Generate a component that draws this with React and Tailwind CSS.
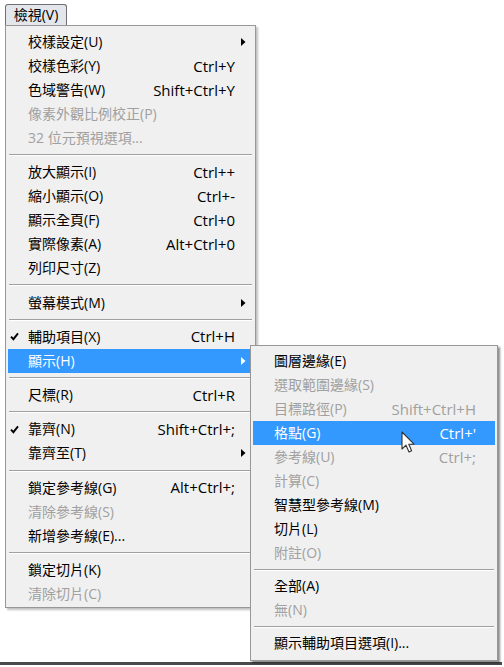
const mainItems = [
  { t: "校樣設定(U)", sub: true },
  { t: "校樣色彩(Y)", k: "Ctrl+Y" },
  { t: "色域警告(W)", k: "Shift+Ctrl+Y" },
  { t: "像素外觀比例校正(P)", d: true },
  { t: "32 位元預視選項...", d: true },
  "sep",
  { t: "放大顯示(I)", k: "Ctrl++" },
  { t: "縮小顯示(O)", k: "Ctrl+-" },
  { t: "顯示全頁(F)", k: "Ctrl+0" },
  { t: "實際像素(A)", k: "Alt+Ctrl+0" },
  { t: "列印尺寸(Z)" },
  "sep",
  { t: "螢幕模式(M)", sub: true },
  "sep",
  { t: "輔助項目(X)", k: "Ctrl+H", c: true },
  { t: "顯示(H)", sub: true, h: true },
  "sep",
  { t: "尺標(R)", k: "Ctrl+R" },
  "sep",
  { t: "靠齊(N)", k: "Shift+Ctrl+;", c: true },
  { t: "靠齊至(T)", sub: true },
  "sep",
  { t: "鎖定參考線(G)", k: "Alt+Ctrl+;" },
  { t: "清除參考線(S)", d: true },
  { t: "新增參考線(E)..." },
  "sep",
  { t: "鎖定切片(K)" },
  { t: "清除切片(C)", d: true },
];

const showItems = [
  { t: "圖層邊緣(E)" },
  { t: "選取範圍邊緣(S)", d: true },
  { t: "目標路徑(P)", k: "Shift+Ctrl+H", d: true },
  { t: "格點(G)", k: "Ctrl+'", h: true },
  { t: "參考線(U)", k: "Ctrl+;", d: true },
  { t: "計算(C)", d: true },
  { t: "智慧型參考線(M)" },
  { t: "切片(L)" },
  { t: "附註(O)", d: true },
  "sep",
  { t: "全部(A)" },
  { t: "無(N)", d: true },
  "sep",
  { t: "顯示輔助項目選項(I)..." },
];

const font = { fontFamily: '"Open Sans", "Noto Sans CJK TC", sans-serif' };

function Check() {
  return (
    <svg width="9" height="9" viewBox="0 0 9 9" className="ml-[2px]">
      <path d="M1 4.6 L3.4 7.2 L8 1.4" fill="none" stroke="currentColor" strokeWidth="1.9" />
    </svg>
  );
}

function Arrow() {
  return (
    <svg width="5" height="8" viewBox="0 0 5 8">
      <polygon points="0,0 4.5,4 0,8" fill="currentColor" />
    </svg>
  );
}

function Sep({ h }) {
  return (
    <div className={`flex flex-col justify-center ${h} px-[1px]`}>
      <div className="h-px bg-[#a0a0a0]" />
      <div className="h-px bg-white" />
    </div>
  );
}

function Row({ item, padLeft, right }) {
  const color = item.h ? "bg-[#3399ff] text-white" : item.d ? "text-[#a0a0a0]" : "text-black";
  return (
    <div className={`flex h-6 items-center ${color}`}>
      <div className={`${padLeft} flex shrink-0 items-center`}>{item.c && <Check />}</div>
      <div className="flex-1 whitespace-nowrap">{item.t}</div>
      {item.k && <div className="whitespace-nowrap text-[15px]">{item.k}</div>}
      <div className={`${right} flex shrink-0 items-center pl-[6px]`}>{item.sub && <Arrow />}</div>
    </div>
  );
}

export default function App() {
  return (
    <div className="relative h-[667px] w-[504px] bg-white text-[14px] leading-none" style={font}>
      <div className="h-[665px] w-[502px] border-b-[3px] border-b-[#4a4a4a] bg-white">
        <div className="pl-[5px] pt-[4px]">
          <div className="relative z-10 flex h-[21px] w-[62px] items-center justify-center rounded-t-[3px] border border-b-0 border-[#707070] bg-[#e3e6ea] text-black">
            檢視(V)
          </div>
          <div className="w-[251px] border border-[#979797] bg-[#f0f0f0] px-[2px] pb-[1px] pt-[4px] shadow-[2px_2px_2px_rgba(0,0,0,0.25)]">
            {mainItems.map((it, i) =>
              it === "sep" ? <Sep key={i} h="h-[10.3px]" /> : <Row key={i} item={it} padLeft="w-[20px]" right="w-[18px]" />
            )}
          </div>
        </div>
      </div>

      <div className="absolute left-[250px] top-[345px] w-[248px] border border-[#979797] bg-[#f0f0f0] px-[2px] pb-[5px] pt-[3px] shadow-[2px_2px_2px_rgba(0,0,0,0.45)]">
        {showItems.map((it, i) =>
          it === "sep" ? <Sep key={i} h="h-[9px]" /> : <Row key={i} item={it} padLeft="w-[21px]" right="w-[19px]" />
        )}
      </div>

      <svg className="absolute left-[401px] top-[431px]" width="16" height="24" viewBox="0 0 16 24">
        <path
          d="M1 1 L1 18 L5 14.2 L8 21 L10.6 19.8 L7.8 13.2 L13 13.2 Z"
          fill="white"
          stroke="#333"
          strokeWidth="1.1"
          strokeLinejoin="round"
        />
      </svg>
    </div>
  );
}
